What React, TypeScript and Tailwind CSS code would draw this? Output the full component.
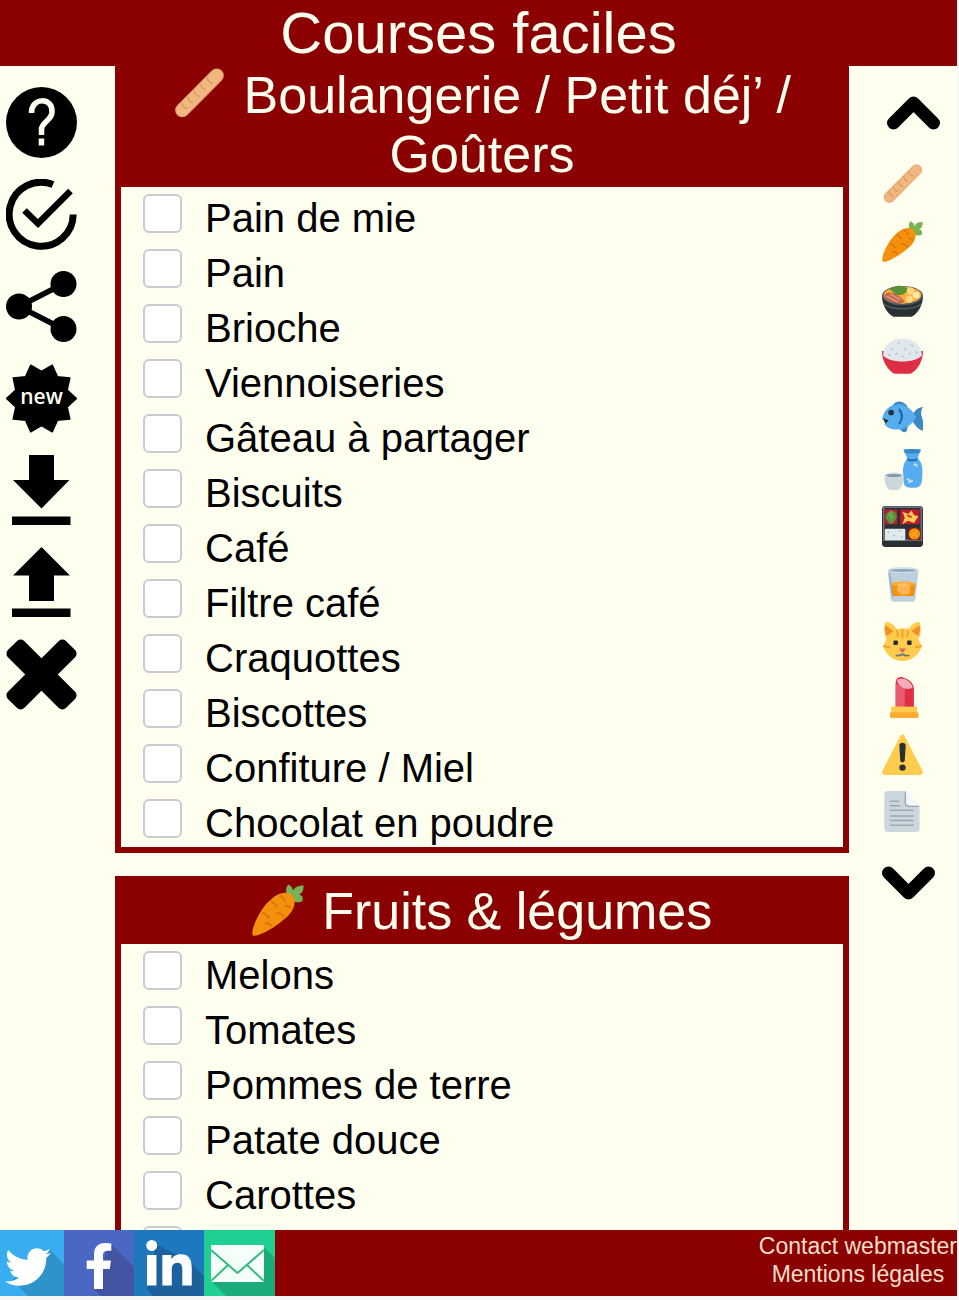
import type { ReactNode } from "react";
import { FaFacebookF, FaLinkedinIn, FaTwitter } from "react-icons/fa";

function Emoji({ name, className }: { name: string; className: string }) {
  return (
    <svg viewBox="0 0 36 36" className={className} aria-hidden="true">
      {emojis[name]}
    </svg>
  );
}

const emojis: Record<string, ReactNode> = {
  bread: (
    <>
      <path d="M6.4 29.2 30.3 5.2" stroke="#e6aa73" strokeWidth="9.8" strokeLinecap="round" />
      <path d="M6.4 29.2 30.3 5.2" stroke="#f0b880" strokeWidth="8" strokeLinecap="round" />
      <path
        d="M6 24q1 4 4 4M10 20q1 4 4 4M14.500 15.500q1 4 4 4M19 11q1 4 4 4M23.500 6.500q1 4 4 4"
        fill="none"
        stroke="#dda064"
        strokeWidth="1.300"
      />
    </>
  ),
  carrot: (
    <>
      <path
        d="M26.800 10.500C23.500 8 22.500 3.500 25 .3c2 .8 3 2 3.300 4C30.500 1.300 33 .8 35.700 1c.2 3-.8 5-3 6.300 2.300.6 3 2.500 2.200 4.700-2.700 1.200-6 .8-8.100-1.500z"
        fill="#77b255"
      />
      <path
        d="M.5 35.600C-1.300 31 6.500 15.300 13.500 10.300 18.500 5.500 25 4.800 28 8c3 3.400 1.500 9.500-3 14C18.500 28.500 4.500 37.300.5 35.600z"
        fill="#f4900c"
      />
      <path
        d="M13 12q3 1 4 4M19 8q3 1 4 4M7.500 20q3 1 4.500 4M17 20q3 0 5.500 3M23 15q2.500 0 4 2M9 27q3 0 4.500 2"
        fill="none"
        stroke="#d5760a"
        strokeWidth="1.300"
      />
    </>
  ),
  stew: (
    <g transform="translate(0 3)">
      <path d="M0 13c0 7 4 15 10 18h16c6-3 10-11 10-18z" fill="#292f33" />
      <path d="M1 18c4 7 30 7 34 0l-1 3c-6 5-26 5-32 0z" fill="#4b5b66" />
      <ellipse cx="18" cy="12.500" rx="18" ry="8.500" fill="#4b5b66" />
      <ellipse cx="18" cy="12" rx="16.500" ry="7.500" fill="#ffac33" />
      <path d="M2 12c4-5 13-1 18 6-8 3-17 0-18-6z" fill="#c1694f" />
      <path d="M6 7c3-3 12-5 16-1 1 4-4 6-7 6-4 0-5-4-9-5z" fill="#5c913b" />
      <path d="M4 13l10 5M7 11l9 5" stroke="#e6a48f" strokeWidth="1" />
      <circle cx="25" cy="8.500" r="3.200" fill="#ffd983" />
      <circle cx="30" cy="12" r="3" fill="#ffe8b6" />
      <circle cx="24" cy="15.500" r="3.200" fill="#ffd983" />
    </g>
  ),
  rice: (
    <g transform="translate(0 1)">
      <path d="M0 13c0 9 5 17 11 20h14c6-3 11-11 11-20z" fill="#dd2e44" />
      <path d="M1 17C1 8 8 2 18 2s17 6 17 15c-6 7-28 7-34 0z" fill="#e1e8ed" />
      <path
        d="M8 11l1 1M14 7l1-1M20 11l1 1M26 8l1 1M12 16l1-1M18 18h1M24 16l1-1M30 14l1 1M6 16l1 1"
        stroke="#b5c1ca"
        strokeWidth="1.200"
        strokeLinecap="round"
      />
    </g>
  ),
  fish: (
    <g transform="translate(0 3)">
      <path d="M9 9c3-5 9-5 13 0l1 5H9zM14 28l4 4c2 1 4 0 4-2l1-4z" fill="#3b88c3" />
      <path d="M26 19c1-3 4-8 10-9-2 4-2 6-1 9 1 3 2 7 1 12-5-1-8-6-10-10z" fill="#3b88c3" />
      <path d="M0 21C2 11 9 7 17 8c6 1 10 6 13 11-3 6-9 11-16 11-5 0-9-1-12-5l3-1z" fill="#55acee" />
      <path d="M15 12c4 5 3 9 0 13" fill="none" stroke="#269" strokeWidth="2" />
      <circle cx="8" cy="15" r="2.500" fill="#292f33" />
      <path d="M1 20l5 2-3 3z" fill="#292f33" />
    </g>
  ),
  sake: (
    <>
      <path d="M19 0h15c0 4-3 5-2 9 4 4 4 10 3 19-1 5-3 6-8 6s-8-1-8-6c-1-9-1-15 3-19 0-4-3-5-3-9z" fill="#55acee" />
      <ellipse cx="26.500" cy="2" rx="7.500" ry="2" fill="#3b88c3" />
      <path d="M22 9q4 2 9 0" fill="none" stroke="#269" strokeWidth="1.500" />
      <path d="M28 13l3 2M22 26l3 2M23 29l4-1" stroke="#bbddf5" strokeWidth="2" />
      <path d="M2 23h17c0 6-2 13-6 13H8c-4 0-6-7-6-13z" fill="#ccd6dd" />
      <ellipse cx="10.500" cy="23" rx="8.500" ry="2.500" fill="#e1e8ed" />
      <ellipse cx="10.500" cy="23.300" rx="7" ry="1.500" fill="#8899a6" />
    </>
  ),
  bento: (
    <>
      <rect width="36" height="36" rx="3" fill="#292f33" />
      <path d="M1.500 30V3c0-1 .5-2 2-2h29c1.500 0 2 1 2 2v27z" fill="none" stroke="#66757f" strokeWidth="1.500" />
      <path d="M2.500 3h11v13h-11zM16 3h17v13H16z" fill="#be1931" />
      <path d="M3 9c2-6 9-6 10 0-1 5-4 7-5 7S3 12 3 9z" fill="#5c913b" />
      <path d="M5 7l5 3M8 4v9" stroke="#77b255" />
      <path d="M18 5l5 2 3-3 2 4 4 1-4 6-5-2-5 3 2-6z" fill="#ffcc4d" />
      <path d="M22 8l4 2" stroke="#dd2e44" strokeWidth="1.500" />
      <rect x="2.500" y="20" width="18" height="10" rx="1" fill="#e1e8ed" />
      <path d="M5 23h1M10 26h1M15 22h1M17 27h1" stroke="#99aab5" strokeWidth="1.500" />
      <path d="M23 19h11v11H23z" fill="#7c2418" />
      <circle cx="28.500" cy="24.500" r="5" fill="#f4900c" />
      <path d="M26 22l5 5M31 22l-5 5" stroke="#ffac33" />
    </>
  ),
  whisky: (
    <g transform="translate(0 1)">
      <path d="M5 5h27l-2.500 24c0 2-1 4-3 4h-16c-2 0-3-2-3-4z" fill="#bdd0de" />
      <ellipse cx="18.500" cy="5" rx="13.500" ry="2.600" fill="#d7e5ee" />
      <ellipse cx="18.500" cy="5.500" rx="11.500" ry="1.300" fill="#8fa6b5" />
      <path d="M8 17h21.500L28 28H9.500z" fill="#f4900c" />
      <ellipse cx="18.500" cy="17.500" rx="10.500" ry="2.200" fill="#ffac33" />
      <path d="M14 18l6-2 5 4-1 6-7 1-4-4z" fill="#ffcc8a" opacity=".6" />
      <path d="M6.500 8l3 21" stroke="#8fa6b5" strokeWidth="1.200" />
    </g>
  ),
  cat: (
    <>
      <path
        d="M3 2c3-1 7 2 10 6 3-1 7-1 10 0 3-4 7-7 10-6 2 5 1 11-1 15l3 6c-3 8-9 13-17 13S4 31 1 23l3-6C2 13 1 7 3 2z"
        fill="#ffcc4d"
      />
      <path d="M3 5c3 1 5 3 7 5l-6 4C3 11 2 8 3 5zM33 5c-3 1-5 3-7 5l6 4c1-3 2-6 1-9z" fill="#f18f26" />
      <path d="M18 8v8M13 9l1 6M23 9l-1 6M1 23l6 1M35 23l-6 1" stroke="#f39c2c" strokeWidth="1.500" />
      <rect x="10" y="18" width="4" height="4" rx="1" fill="#292f33" />
      <rect x="22" y="18" width="4" height="4" rx="1" fill="#292f33" />
      <path d="M15 25h6l-3 4z" fill="#e75a70" />
      <path d="M12 31q3 1 6-1 3 2 6 1" fill="none" stroke="#66757f" strokeWidth="1.500" />
    </>
  ),
  lipstick: (
    <>
      <path d="M12 5c0-5 5-6 8-4 4 1 8 5 8 9v18H12z" fill="#dd2e44" />
      <path d="M12 6v22h8V9z" fill="#ea596e" />
      <path d="M13 3c3-4 12-1 14 6-5 4-13-1-14-6z" fill="#f4abba" />
      <rect x="8" y="26" width="23" height="7" fill="#ffcc4d" />
      <rect x="7" y="31" width="25" height="5" rx="1" fill="#ffac33" />
    </>
  ),
  warning: (
    <>
      <path d="M16 2c1-2 3-2 4 0l15.500 30c1 2 0 4-2 4h-31c-2 0-3-2-2-4z" fill="#ffcc4d" />
      <path d="M15.200 10c0-3 5.600-3 5.600 0l-.8 13c0 2.500-4 2.500-4 0z" fill="#292f33" />
      <circle cx="18" cy="29.500" r="2.800" fill="#292f33" />
    </>
  ),
  page: (
    <>
      <path d="M5 0h16l12 13v20c0 2-1 3-3 3H5c-2 0-3-1-3-3V3c0-2 1-3 3-3z" fill="#ccd6dd" />
      <path d="M21 0l12 13H24c-2 0-3-1-3-3z" fill="#f5f8fa" />
      <path d="M20.500 1v9c0 2 1 3.500 3.500 3.500h8M7 9h8M7 13h9M7 17h21M7 22h21M7 26h21M7 30h21" fill="none" stroke="#99aab5" strokeWidth="1.300" />
    </>
  ),
};

// Ten-pointed badge behind the "new" label
const starPoints = Array.from({ length: 20 }, (_, i) => {
  const radius = i % 2 === 0 ? 35 : 27;
  const angle = (i * Math.PI) / 10;
  return `${35.5 + radius * Math.cos(angle)},${35.5 + radius * Math.sin(angle)}`;
}).join(" ");

const tools = [
  {
    label: "Aide",
    icon: (
      <>
        <circle cx="35.500" cy="35.500" r="35.500" />
        <path
          d="M25.500 26C25 10 47 10 46 25c0 8-10 10-10.500 17v6"
          fill="none"
          stroke="ivory"
          strokeWidth="5.500"
        />
        <path d="M32.700 51.500h5.500v7h-5.500z" fill="ivory" />
      </>
    ),
  },
  {
    label: "Tout cocher",
    icon: (
      <>
        <path d="M47 5.500A32 32 0 1 0 67.200 35.500" fill="none" stroke="#000" strokeWidth="7" />
        <path d="M18.500 31.500 32 44.500 64.500 12" fill="none" stroke="#000" strokeWidth="6.500" />
      </>
    ),
  },
  {
    label: "Partager",
    icon: (
      <>
        <path d="M57 13 13 35.500 57 58" fill="none" stroke="#000" strokeWidth="5.500" />
        <circle cx="13" cy="35.500" r="13" />
        <circle cx="57.500" cy="13" r="13" />
        <circle cx="57.500" cy="58" r="13" />
      </>
    ),
  },
  {
    label: "Nouvelle liste",
    icon: (
      <>
        <polygon points={starPoints} stroke="#000" strokeWidth="1.500" strokeLinejoin="round" />
        <text
          x="35.500"
          y="41"
          textAnchor="middle"
          fill="ivory"
          fontSize="21"
          className="font-['Open_Sans',sans-serif] font-semibold"
        >
          new
        </text>
      </>
    ),
  },
  {
    label: "Télécharger",
    icon: <path d="M23 0h25v25h15.500L35.500 53.500 7 25h16zM6 61.500h58.500V70H6z" />,
  },
  {
    label: "Importer",
    icon: <path d="M35.500 0 64 28.500H48V54H23V28.500H7zM6 61.500h58.500V70H6z" />,
  },
  {
    label: "Effacer",
    icon: (
      <>
        <rect x="-41" y="-11.500" width="82" height="23" rx="5" transform="translate(35.500 35.500) rotate(45)" />
        <rect x="-41" y="-11.500" width="82" height="23" rx="5" transform="translate(35.500 35.500) rotate(-45)" />
      </>
    ),
  },
];

const rail = [
  { icon: "bread", label: "Boulangerie", href: "#boulangerie" },
  { icon: "carrot", label: "Fruits & légumes", href: "#fruits" },
  { icon: "stew", label: "Plats", href: "#plats" },
  { icon: "rice", label: "Féculents", href: "#feculents" },
  { icon: "fish", label: "Poisson", href: "#poisson" },
  { icon: "sake", label: "Condiments", href: "#condiments" },
  { icon: "bento", label: "Traiteur", href: "#traiteur" },
  { icon: "whisky", label: "Boissons", href: "#boissons" },
  { icon: "cat", label: "Animaux", href: "#animaux" },
  { icon: "lipstick", label: "Hygiène", href: "#hygiene" },
  { icon: "warning", label: "Entretien", href: "#entretien" },
  { icon: "page", label: "Divers", href: "#divers" },
];

const sections = [
  {
    id: "boulangerie",
    icon: "bread",
    title: "Boulangerie / Petit déj’ / Goûters",
    items: [
      "Pain de mie",
      "Pain",
      "Brioche",
      "Viennoiseries",
      "Gâteau à partager",
      "Biscuits",
      "Café",
      "Filtre café",
      "Craquottes",
      "Biscottes",
      "Confiture / Miel",
      "Chocolat en poudre",
    ],
  },
  {
    id: "fruits",
    icon: "carrot",
    title: "Fruits & légumes",
    items: ["Melons", "Tomates", "Pommes de terre", "Patate douce", "Carottes", ""],
  },
];

function Chevron({ className }: { className?: string }) {
  return (
    <svg viewBox="0 0 58 36" className={`h-9 w-[58px] ${className ?? ""}`} aria-hidden="true">
      <path
        d="M6.500 7 26.500 27 46.500 7"
        fill="none"
        stroke="#000"
        strokeWidth="13"
        strokeLinecap="round"
        strokeLinejoin="round"
      />
    </svg>
  );
}

function Section({ id, icon, title, items }: (typeof sections)[number]) {
  return (
    <section id={id} className="border-[6px] border-[#8b0000] first:border-t-0">
      <h2 className="bg-[#8b0000] pb-[3px] text-center text-[52px] leading-[59px] text-[#fffff0]">
        <Emoji name={icon} className="mr-1 inline-block size-[52px] align-[-7px]" /> {title}
      </h2>
      <ul>
        {items.map((item, i) => (
          <li key={i}>
            <label className="flex h-[55px] items-start gap-[23px] pt-[7px] pl-[22px] text-[40px] leading-[48px]">
              <input
                type="checkbox"
                aria-label={item || "Autre"}
                className="size-[39px] shrink-0 appearance-none rounded-md border-2 border-[#c8ccd2] bg-white checked:bg-[#8b0000]"
              />
              <span>{item}</span>
            </label>
          </li>
        ))}
      </ul>
    </section>
  );
}

// Long shadow cast towards the bottom right of a social tile
function LongShadow({ points, color }: { points: string; color: string }) {
  return (
    <svg viewBox="0 0 71 66" preserveAspectRatio="xMinYMin slice" className="absolute inset-0 size-full" aria-hidden="true">
      <polygon points={points} fill={color} />
    </svg>
  );
}

function Footer() {
  return (
    <footer className="flex h-[66px] shrink-0 justify-between bg-[#8b0000] text-white">
      <div className="flex">
        <a href="#twitter" aria-label="Twitter" className="relative flex w-16 items-center justify-center bg-[#38aef0]">
          <LongShadow points="50,20 71,41 71,66 28,66 12,50" color="#2d93c8" />
          <FaTwitter className="relative mt-2 mr-2 size-[46px]" />
        </a>
        <a href="#facebook" aria-label="Facebook" className="relative flex w-[70px] items-center justify-center bg-[#4a67c4]">
          <LongShadow points="46,13 71,38 71,66 37,66 30,59" color="#4254a2" />
          <FaFacebookF className="relative mt-1.5 size-[46px]" />
        </a>
        <a href="#linkedin" aria-label="LinkedIn" className="relative flex w-[70px] items-center justify-center bg-[#1d78bd]">
          <LongShadow points="22,14 56,32 71,47 71,66 19,66 13,59" color="#1c619b" />
          <FaLinkedinIn className="relative mt-1.5 size-[52px]" />
        </a>
        <a href="#mail" aria-label="E-mail" className="relative flex w-[71px] items-center justify-center bg-[#20cf92]">
          <LongShadow points="60,17 71,28 71,66 22,66 9,53" color="#1cab7a" />
          <svg viewBox="0 0 53 37" className="relative mr-1 w-[53px]" aria-hidden="true">
            <path d="M0 0h53v37H0z" fill="#f4fffa" />
            <path d="M0 5 26.500 28 53 5M0 36 17 20M53 36 36 20" fill="none" stroke="#35ba7d" strokeWidth="2" />
          </svg>
        </a>
      </div>
      <nav className="flex flex-col items-center pt-0.5 text-[23px] leading-7 text-[#f6dfc8]">
        <a href="#contact">Contact webmaster</a>
        <a href="#mentions">Mentions légales</a>
      </nav>
    </footer>
  );
}

export default function App() {
  return (
    <div className="h-screen bg-[#f5f5f7] pr-0.5 pb-1 font-['Liberation_Sans',Arial,sans-serif] text-black">
      <div className="flex h-full flex-col bg-[#fffff0]">
        <header className="shrink-0 bg-[#8b0000]">
          <h1 className="text-center text-[58px] leading-[66px] text-[#fffff0]">Courses faciles</h1>
        </header>

        <div className="grid min-h-0 flex-1 grid-cols-[115px_1fr_108px]">
          {/* Tools */}
          <div className="flex flex-col gap-[21px] pt-[21px] pl-1.5">
            {tools.map((tool) => (
              <button key={tool.label} type="button" aria-label={tool.label} className="size-[71px]">
                <svg viewBox="0 0 71 71" className="size-full" aria-hidden="true">
                  {tool.icon}
                </svg>
              </button>
            ))}
          </div>

          {/* Shopping list */}
          <main className="flex min-h-0 flex-col gap-[23px] overflow-y-auto [scrollbar-width:none]">
            {sections.map((section) => (
              <Section key={section.id} {...section} />
            ))}
          </main>

          {/* Section shortcuts */}
          <nav className="flex flex-col items-start pt-7 pl-[33px]">
            <button type="button" aria-label="Monter">
              <Chevron className="rotate-180" />
            </button>
            <div className="my-[34px] flex flex-col gap-4">
              {rail.map((link) => (
                <a key={link.icon} href={link.href} aria-label={link.label}>
                  <Emoji name={link.icon} className="size-[41px]" />
                </a>
              ))}
            </div>
            <button type="button" aria-label="Descendre">
              <Chevron />
            </button>
          </nav>
        </div>

        <Footer />
      </div>
    </div>
  );
}
